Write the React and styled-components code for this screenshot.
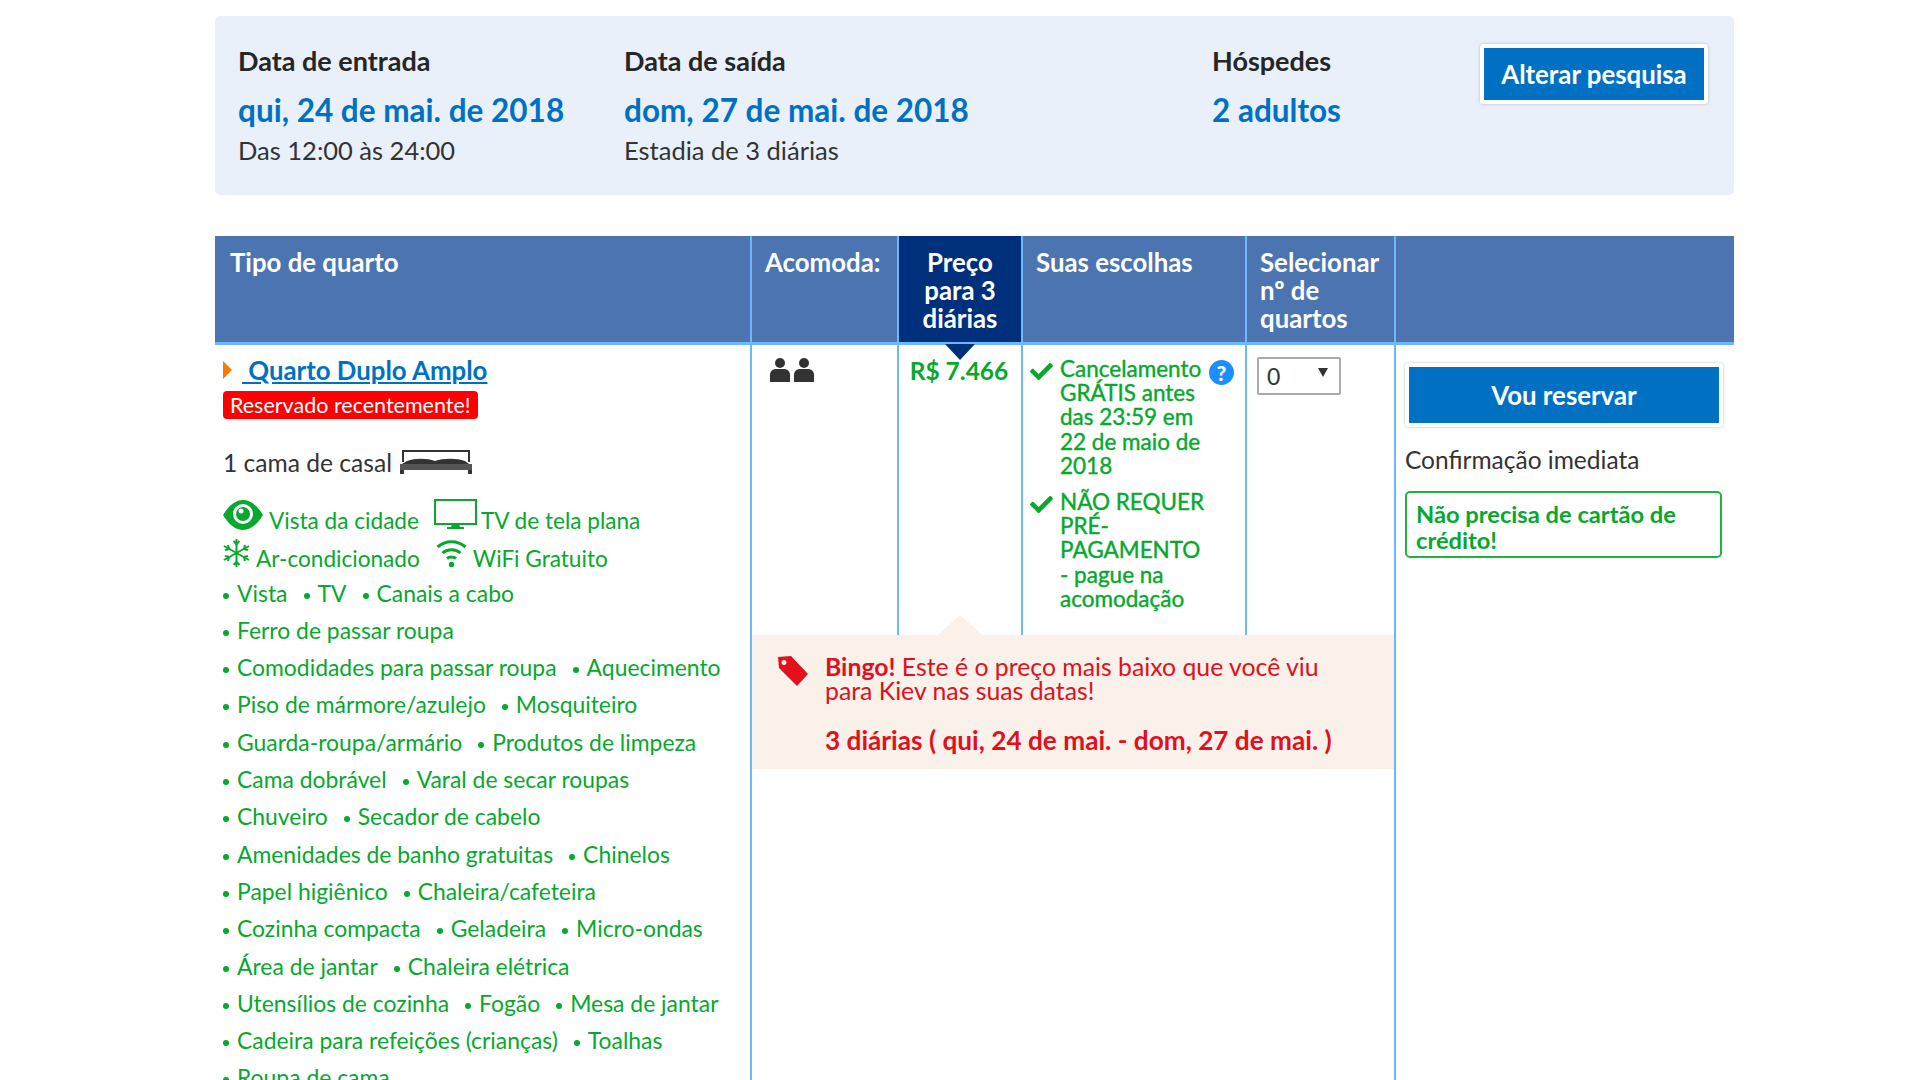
import styled, { createGlobalStyle } from "styled-components";
import { FaCheck } from "react-icons/fa";

const GREEN = "#06a82e";
const BLUE = "#0071c2";
const LINE = "#6bb8fb";
const RED = "#e0101c";

const Global = createGlobalStyle`
    html, body {
        margin: 0;
        height: 100%;
        overflow: hidden;
        background: #fff;
        font-family: "Lato", "Liberation Sans", sans-serif;
        color: #333;
    }
`;

const Page = styled.div`
    width: 1519px;
    margin-left: 215px;
    padding-top: 16px;
`;

const Summary = styled.section`
    height: 179px;
    background: #e9f0fa;
    border-radius: 5px;
    padding: 30px 26px 0 23px;
    box-sizing: border-box;
    display: flex;
    align-items: flex-start;
    margin-bottom: 41px;
`;

const SummaryCol = styled.div`
    width: ${(p) => p.$w}px;
`;

const SummaryLabel = styled.div`
    font-size: 27px;
    font-weight: 700;
    line-height: 30px;
    color: #262626;
`;

const SummaryValue = styled.div`
    font-size: 31.5px;
    font-weight: 700;
    line-height: 36px;
    margin-top: 16px;
    color: ${BLUE};
`;

const SummarySub = styled.div`
    font-size: 25.5px;
    line-height: 30px;
    margin-top: 7px;
    color: #333;
`;

const BlueButton = styled.button`
    font-family: inherit;
    font-weight: 700;
    color: #fff;
    background: ${BLUE};
    border: 4px solid #fff;
    border-radius: 3px;
    box-shadow: 0 0 3px rgba(0, 0, 0, 0.25);
    box-sizing: border-box;
`;

const SearchButton = styled(BlueButton)`
    width: 228px;
    height: 60px;
    font-size: 25.8px;
    margin: -2px 0 0 auto;
`;

const Table = styled.div`
    display: grid;
    grid-template-columns: 537px 147px 124px 224px 149px 338px;
    grid-template-rows: 109px 290px auto;
`;

const HeadCell = styled.div`
    background: ${(p) => (p.$dark ? "#002f7c" : "#4b74b1")};
    border-bottom: 3px solid ${LINE};
    border-right: ${(p) => (p.$last ? "none" : `2px solid ${LINE}`)};
    box-sizing: border-box;
    padding: 12px 6px 0 ${(p) => (p.$dark ? 6 : 13)}px;
    color: #fff;
    font-size: 25.8px;
    font-weight: 700;
    line-height: 28px;
    text-align: ${(p) => (p.$dark ? "center" : "left")};
    position: relative;
    &:first-child {
        padding-left: 15px;
    }
`;

const SortMark = styled.span`
    position: absolute;
    left: 50%;
    bottom: -18px;
    margin-left: -15px;
    border-left: 15px solid transparent;
    border-right: 15px solid transparent;
    border-top: 16px solid #002f7c;
`;

const RoomCell = styled.div`
    grid-row: 2 / span 2;
    border-right: 2px solid ${LINE};
    padding: 7px 0 0 8px;
    min-height: 680px;
`;

const RoomName = styled.div`
    display: flex;
    align-items: center;
    height: 36px;
`;

const Arrow = styled.span`
    width: 0;
    height: 0;
    margin-right: 10px;
    border-top: 9px solid transparent;
    border-bottom: 9px solid transparent;
    border-left: 9px solid #f57c00;
`;

const RoomLink = styled.a`
    font-size: 25.8px;
    font-weight: 700;
    color: ${BLUE};
    text-decoration: underline;
    white-space: pre;
`;

const RecentBadge = styled.div`
    width: fit-content;
    height: 28px;
    margin-top: 3px;
    padding: 0 7px;
    border-radius: 4px;
    background: #f00;
    color: #fff;
    font-size: 21.5px;
    line-height: 28px;
`;

const BedLine = styled.div`
    display: flex;
    align-items: center;
    gap: 7px;
    margin-top: 26px;
    height: 34px;
    font-size: 24.6px;
`;

const Facilities = styled.div`
    margin-top: 19px;
    color: ${GREEN};
    font-size: 22.6px;
`;

const FacilityRow = styled.div`
    display: flex;
    align-items: flex-end;
    height: 37.3px;
`;

const Facility = styled.span`
    display: inline-flex;
    align-items: flex-end;
    gap: ${(p) => p.$gap || 6}px;
    margin-right: ${(p) => p.$mr || 0}px;
    line-height: 28px;
    svg {
        margin-bottom: 5px;
    }
`;

const Amenities = styled.div`
    margin-top: 2px;
    color: ${GREEN};
    font-size: 22.9px;
`;

const AmenityLine = styled.div`
    height: 37.3px;
    line-height: 37.3px;
    white-space: nowrap;
`;

const Amenity = styled.span`
    margin-right: 16px;
    &::before {
        content: "";
        display: inline-block;
        width: 6px;
        height: 6px;
        border-radius: 50%;
        background: ${GREEN};
        margin-right: 8px;
        vertical-align: 3px;
    }
`;

const BodyCell = styled.div`
    border-right: 2px solid ${LINE};
    box-sizing: border-box;
    position: relative;
`;

const Persons = styled.div`
    display: flex;
    padding: 12px 0 0 17px;
`;

const Price = styled.div`
    padding-top: 10px;
    padding-right: 2px;
    text-align: center;
    font-size: 24.5px;
    font-weight: 700;
    line-height: 32px;
    color: ${GREEN};
`;

const Choice = styled.div`
    display: flex;
    gap: 7px;
    padding-left: 7px;
    margin-bottom: 12px;
    color: ${GREEN};
    font-size: 22.5px;
    line-height: 24.2px;
    -webkit-text-stroke: 0.4px ${GREEN};
`;

const ChoiceText = styled.div`
    width: 148px;
    flex: none;
`;

const ChoiceList = styled.div`
    padding-top: 12px;
`;

const Help = styled.span`
    position: absolute;
    left: 186px;
    top: 15px;
    width: 25px;
    height: 25px;
    border-radius: 50%;
    background: #1b8fff;
    color: #fff;
    font-size: 21px;
    font-weight: 900;
    line-height: 25px;
    text-align: center;
`;

const SelectWrap = styled.div`
    position: relative;
    width: 84px;
    height: 38px;
    margin: 12px 0 0 10px;
    &::after {
        content: "";
        position: absolute;
        right: 13px;
        top: 11px;
        border-left: 5px solid transparent;
        border-right: 5px solid transparent;
        border-top: 9px solid #333;
    }
`;

const RoomSelect = styled.select`
    appearance: none;
    width: 100%;
    height: 100%;
    padding: 0 8px;
    border: 2px solid #aaa;
    border-radius: 2px;
    background: #fff;
    color: #333;
    font-family: inherit;
    font-size: 23px;
`;

const Bingo = styled.div`
    grid-column: 2 / span 4;
    grid-row: 3;
    align-self: start;
    height: 134px;
    margin-right: 2px;
    box-sizing: border-box;
    background: #f9f1ea;
    display: flex;
    padding: 20px 0 0 25px;
    position: relative;
    color: ${RED};
    &::before {
        content: "";
        position: absolute;
        left: 186px;
        top: -20px;
        border-left: 22px solid transparent;
        border-right: 22px solid transparent;
        border-bottom: 20px solid #f9f1ea;
    }
`;

const BingoText = styled.div`
    margin-left: 16px;
    font-size: 24.8px;
    line-height: 24px;
    width: 520px;
`;

const BingoDates = styled.div`
    font-weight: 700;
    margin-top: 25px;
    font-size: 26.2px;
    white-space: nowrap;
`;

const ActionCell = styled.div`
    grid-column: 6;
    grid-row: 2 / span 2;
    border-left: 2px solid ${LINE};
    margin-left: -2px;
    padding: 18px 0 0 9px;
`;

const ReserveButton = styled(BlueButton)`
    width: 318px;
    height: 64px;
    font-size: 25.8px;
`;

const Confirm = styled.div`
    margin-top: 18px;
    font-size: 24.5px;
    line-height: 30px;
`;

const NoCard = styled.div`
    margin-top: 16px;
    width: 317px;
    height: 67px;
    box-sizing: border-box;
    border: 2px solid #1fb53c;
    border-radius: 5px;
    padding: 8px 9px 0;
    color: ${GREEN};
    font-size: 23.7px;
    font-weight: 700;
    line-height: 26px;
`;

const amenities = [
    ["Vista", "TV", "Canais a cabo"],
    ["Ferro de passar roupa"],
    ["Comodidades para passar roupa", "Aquecimento"],
    ["Piso de mármore/azulejo", "Mosquiteiro"],
    ["Guarda-roupa/armário", "Produtos de limpeza"],
    ["Cama dobrável", "Varal de secar roupas"],
    ["Chuveiro", "Secador de cabelo"],
    ["Amenidades de banho gratuitas", "Chinelos"],
    ["Papel higiênico", "Chaleira/cafeteira"],
    ["Cozinha compacta", "Geladeira", "Micro-ondas"],
    ["Área de jantar", "Chaleira elétrica"],
    ["Utensílios de cozinha", "Fogão", "Mesa de jantar"],
    ["Cadeira para refeições (crianças)", "Toalhas"],
    ["Roupa de cama"],
];

function PersonsIcon() {
    return (
        <svg width="46" height="26" viewBox="0 0 46 26" fill="#333">
            <circle cx="11" cy="6" r="5" />
            <path d="M1 25v-7c0-4 3-6 6-6h8c3 0 6 2 6 6v7z" />
            <circle cx="35" cy="6" r="5" />
            <path d="M25 25v-7c0-4 3-6 6-6h8c3 0 6 2 6 6v7z" />
        </svg>
    );
}

function BedIcon() {
    return (
        <svg width="74" height="26" viewBox="0 0 74 26">
            <path d="M4 13V2h66v11" fill="none" stroke="#333" strokeWidth="2" />
            <path d="M8 12c8-3 20-3 28 0 8-3 22-3 30 0l4 3H3z" fill="#333" />
            <rect x="1" y="15" width="72" height="6" fill="#555" />
            <rect x="1" y="21" width="4" height="4" fill="#333" />
            <rect x="69" y="21" width="4" height="4" fill="#333" />
        </svg>
    );
}

function EyeIcon() {
    return (
        <svg width="40" height="30" viewBox="0 0 40 30">
            <path d="M0 15C6 5 13 0 20 0s14 5 20 15c-6 10-13 15-20 15S6 25 0 15z" fill={GREEN} />
            <circle cx="20" cy="14" r="10" fill="#fff" />
            <circle cx="20" cy="14" r="7" fill={GREEN} />
            <circle cx="18" cy="11" r="2.5" fill="#fff" />
        </svg>
    );
}

function TvIcon() {
    return (
        <svg width="43" height="31" viewBox="0 0 43 31">
            <rect x="1" y="1" width="41" height="24" fill="none" stroke={GREEN} strokeWidth="2" />
            <path d="M18 25h7l1 3h4v2H13v-2h4z" fill={GREEN} />
        </svg>
    );
}

function SnowIcon() {
    return (
        <svg width="27" height="30" viewBox="0 0 27 30" stroke={GREEN} strokeWidth="2" fill="none">
            <path d="M13.5 1v28M1 8l25 14M1 22l25-14" />
            <path d="M10.5 3l3 3 3-3M10.5 27l3-3 3 3M2 12l4-1-1-4M25 18l-4 1 1 4M2 18l4 1-1 4M25 12l-4-1 1-4" />
        </svg>
    );
}

function WifiIcon() {
    return (
        <svg width="31" height="30" viewBox="0 0 31 30" fill="none" stroke={GREEN} strokeWidth="3">
            <path d="M1.5 9c8-7 20-7 28 0" />
            <path d="M6.5 15c5-4.500 13-4.500 18 0" />
            <path d="M11 20.500c2.500-2 6.500-2 9 0" />
            <circle cx="15.500" cy="26.500" r="2.700" fill={GREEN} stroke="none" />
        </svg>
    );
}

function TagIcon() {
    return (
        <svg width="32" height="32" viewBox="0 0 32 32">
            <path
                fillRule="evenodd"
                d="M1 2l13-1 17 18-11 12L2 13zM7 5a2.500 2.500 0 1 0 .01 0z"
                fill="#e2111b"
            />
        </svg>
    );
}

function App() {
    return (
        <Page>
            <Global />
            <Summary>
                <SummaryCol $w={386}>
                    <SummaryLabel>Data de entrada</SummaryLabel>
                    <SummaryValue>qui, 24 de mai. de 2018</SummaryValue>
                    <SummarySub>Das 12:00 às 24:00</SummarySub>
                </SummaryCol>
                <SummaryCol $w={588}>
                    <SummaryLabel>Data de saída</SummaryLabel>
                    <SummaryValue>dom, 27 de mai. de 2018</SummaryValue>
                    <SummarySub>Estadia de 3 diárias</SummarySub>
                </SummaryCol>
                <SummaryCol $w={200}>
                    <SummaryLabel>Hóspedes</SummaryLabel>
                    <SummaryValue>2 adultos</SummaryValue>
                </SummaryCol>
                <SearchButton>Alterar pesquisa</SearchButton>
            </Summary>

            <Table>
                <HeadCell>Tipo de quarto</HeadCell>
                <HeadCell>Acomoda:</HeadCell>
                <HeadCell $dark>
                    Preço para 3 diárias
                    <SortMark />
                </HeadCell>
                <HeadCell>Suas escolhas</HeadCell>
                <HeadCell>Selecionar nº de quartos</HeadCell>
                <HeadCell $last />

                <RoomCell>
                    <RoomName>
                        <Arrow />
                        <RoomLink> Quarto Duplo Amplo</RoomLink>
                    </RoomName>
                    <RecentBadge>Reservado recentemente!</RecentBadge>
                    <BedLine>
                        1 cama de casal
                        <BedIcon />
                    </BedLine>
                    <Facilities>
                        <FacilityRow>
                            <Facility $mr={15}>
                                <EyeIcon />
                                Vista da cidade
                            </Facility>
                            <Facility $gap={4}>
                                <TvIcon />
                                TV de tela plana
                            </Facility>
                        </FacilityRow>
                        <FacilityRow>
                            <Facility $mr={16}>
                                <SnowIcon />
                                Ar-condicionado
                            </Facility>
                            <Facility>
                                <WifiIcon />
                                WiFi Gratuito
                            </Facility>
                        </FacilityRow>
                    </Facilities>
                    <Amenities>
                        {amenities.map((line) => (
                            <AmenityLine key={line[0]}>
                                {line.map((item) => (
                                    <Amenity key={item}>{item}</Amenity>
                                ))}
                            </AmenityLine>
                        ))}
                    </Amenities>
                </RoomCell>

                <BodyCell>
                    <Persons>
                        <PersonsIcon />
                    </Persons>
                </BodyCell>
                <BodyCell>
                    <Price>R$ 7.466</Price>
                </BodyCell>
                <BodyCell>
                    <ChoiceList>
                        <Choice>
                            <FaCheck size={23} style={{ flex: "none", marginTop: 3 }} />
                            <ChoiceText>Cancelamento GRÁTIS antes das 23:59 em 22 de maio de 2018</ChoiceText>
                        </Choice>
                        <Help>?</Help>
                        <Choice>
                            <FaCheck size={23} style={{ flex: "none", marginTop: 3 }} />
                            <ChoiceText>NÃO REQUER PRÉ-PAGAMENTO - pague na acomodação</ChoiceText>
                        </Choice>
                    </ChoiceList>
                </BodyCell>
                <BodyCell>
                    <SelectWrap>
                        <RoomSelect defaultValue="0">
                            <option value="0">0</option>
                            <option value="1">1</option>
                        </RoomSelect>
                    </SelectWrap>
                </BodyCell>

                <Bingo>
                    <TagIcon />
                    <BingoText>
                        <b>Bingo!</b> Este é o preço mais baixo que você viu para Kiev nas suas datas!
                        <BingoDates>3 diárias ( qui, 24 de mai. - dom, 27 de mai. )</BingoDates>
                    </BingoText>
                </Bingo>

                <ActionCell>
                    <ReserveButton>Vou reservar</ReserveButton>
                    <Confirm>Confirmação imediata</Confirm>
                    <NoCard>Não precisa de cartão de crédito!</NoCard>
                </ActionCell>
            </Table>
        </Page>
    );
}

export default App;
